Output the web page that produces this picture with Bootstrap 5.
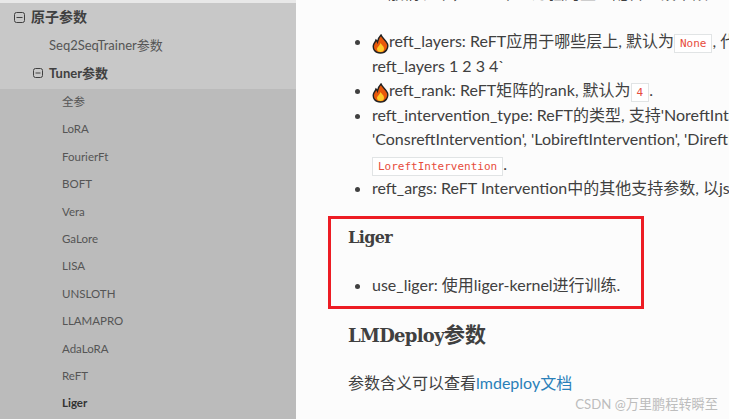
<!DOCTYPE html>
<html lang="en">
<head>
    <meta charset="UTF-8">
    <meta name="viewport" content="width=device-width, initial-scale=1">
    <title>Liger</title>
    <link href="https://cdn.jsdelivr.net/npm/bootstrap@5.3.0/dist/css/bootstrap.min.css" rel="stylesheet">
    <style>
        html, body {
            height: 419px;
            overflow: hidden;
        }

        body {
            background-color: #fcfcfc;
            color: #404040;
            font-family: Lato, "Noto Sans CJK SC", sans-serif;
        }

        .page {
            height: 419px;
            position: relative;
        }

        .side {
            width: 296px;
            flex: none;
            background-color: #c8c8c8;
            border-top: 3px solid #e8e8e8;
            color: #404040;
        }

        .side-row {
            height: 28px;
            font-size: 13px;
            line-height: 28px;
        }

        .side-first {
            padding-left: 14px;
            font-size: 14px;
            font-weight: 700;
            gap: 6px;
        }

        .side-second {
            padding-left: 49px;
            color: #555;
        }

        .side-tuner {
            padding-left: 33px;
            font-weight: 700;
            gap: 6px;
            color: #404040;
            margin-bottom: 2px;
        }

        .sub-list {
            background-color: #bbbbbb;
            height: 335px;
        }

        .sub-row {
            height: 27.4px;
            padding-left: 62px;
            font-size: 11.5px;
            line-height: 25px;
            color: #555;
        }

        .sub-active {
            color: #333;
            font-weight: 700;
        }

        .doc {
            min-width: 0;
            overflow: hidden;
            white-space: nowrap;
            font-size: 16px;
            line-height: 24.5px;
        }

        .cut-line {
            margin: -19px 0 0 76px;
            height: 48px;
        }

        .param-list {
            padding-left: 76px;
            margin: 0;
        }

        code.inline-val {
            font-family: "DejaVu Sans Mono", monospace;
            font-size: 11px;
            line-height: 1;
            color: #e74c3c;
            background-color: #fff;
            border: 1px solid #e1e4e5;
            padding: 2px 5px;
        }

        .flame {
            width: 17px;
            height: 20px;
            margin-block: -4px;
            vertical-align: -3px;
        }

        .red-box {
            width: 316px;
            height: 93px;
            margin: 15px 0 0 32px;
            border: 3px solid #ed1c24;
            padding: 7px 0 0 17px;
        }

        .doc-title {
            font-family: "DejaVu Serif", "Noto Sans CJK SC", serif;
            font-weight: 700;
            font-size: 16px;
            letter-spacing: -.6px;
            line-height: 24px;
            margin: 0 0 23px;
        }

        .red-box ul {
            padding-left: 24px;
            margin: 0;
        }

        .deploy-title {
            font-family: "DejaVu Serif", "Noto Sans CJK SC", serif;
            font-weight: 700;
            font-size: 18px;
            letter-spacing: -.7px;
            line-height: 28px;
            margin: 12px 0 21px 52px;
        }

        .deploy-title span {
            font-size: 21px;
            letter-spacing: 0;
        }

        .deploy-text {
            margin: 0 0 0 52px;
        }

        .deploy-text a {
            color: #2980b9;
            text-decoration: none;
        }

        .mark-text {
            position: absolute;
            right: 11px;
            bottom: 7px;
            font-size: 13.2px;
            line-height: 16px;
            color: #bdbdbd;
        }
    </style>
</head>
<body>
    <div class="page d-flex">
        <nav class="side">
            <div class="side-row side-first d-flex align-items-center">
                <svg width="11" height="11" viewBox="0 0 11 11" fill="none" stroke="#404040"><rect x=".5" y=".5" width="10" height="10" rx="2"/><path d="M2.500 5.500h6"/></svg>
                <span>原子参数</span>
            </div>
            <div class="side-row side-second">Seq2SeqTrainer参数</div>
            <div class="side-row side-tuner d-flex align-items-center">
                <svg width="10" height="10" viewBox="0 0 10 10" fill="none" stroke="#404040"><rect x=".5" y=".5" width="9" height="9" rx="2"/><path d="M2.500 5h5"/></svg>
                <span>Tuner参数</span>
            </div>
            <div class="sub-list">
                <div class="sub-row">全参</div>
                <div class="sub-row">LoRA</div>
                <div class="sub-row">FourierFt</div>
                <div class="sub-row">BOFT</div>
                <div class="sub-row">Vera</div>
                <div class="sub-row">GaLore</div>
                <div class="sub-row">LISA</div>
                <div class="sub-row">UNSLOTH</div>
                <div class="sub-row">LLAMAPRO</div>
                <div class="sub-row">AdaLoRA</div>
                <div class="sub-row">ReFT</div>
                <div class="sub-row sub-active">Liger</div>
            </div>
        </nav>

        <main class="doc flex-grow-1">
            <p class="cut-line">一般情况下，一个中一过强的卫星配合一段不限一个</p>
            <ul class="param-list">
                <li><svg class="flame" viewBox="0 0 17 20"><path d="M9 1c1 3 5 5 6.500 9 1.200 4-1.500 9-7 9s-8-4-7-8c.5-2 2-3 2.500-5 1 1 1.500 2 1.500 2C6 5 7 3 9 1z" fill="#e8590c" stroke="#222" stroke-width="1.400"/><path d="M8.500 9c1 2 3.500 3 3.500 6 0 2-1.500 3-3.500 3S5 17 5 15c0-2 2.500-3 3.500-6z" fill="#ffc928"/></svg>reft_layers: ReFT应用于哪些层上, 默认为<code class="inline-val">None</code>, 代表所有层<br>reft_layers 1 2 3 4`</li>
                <li><svg class="flame" viewBox="0 0 17 20"><path d="M9 1c1 3 5 5 6.500 9 1.200 4-1.500 9-7 9s-8-4-7-8c.5-2 2-3 2.500-5 1 1 1.500 2 1.500 2C6 5 7 3 9 1z" fill="#e8590c" stroke="#222" stroke-width="1.400"/><path d="M8.500 9c1 2 3.500 3 3.500 6 0 2-1.500 3-3.500 3S5 17 5 15c0-2 2.500-3 3.500-6z" fill="#ffc928"/></svg>reft_rank: ReFT矩阵的rank, 默认为<code class="inline-val">4</code>.</li>
                <li>reft_intervention_type: ReFT的类型, 支持'NoreftIntervention',<br>'ConsreftIntervention', 'LobireftIntervention', 'DireftIntervention',<br><code class="inline-val">LoreftIntervention</code>.</li>
                <li>reft_args: ReFT Intervention中的其他支持参数, 以json格式传入</li>
            </ul>

            <section class="red-box">
                <h3 class="doc-title">Liger</h3>
                <ul>
                    <li>use_liger: 使用liger-kernel进行训练.</li>
                </ul>
            </section>

            <h3 class="deploy-title">LMDeploy<span>参数</span></h3>
            <p class="deploy-text">参数含义可以查看<a href="#">lmdeploy文档</a></p>
        </main>

        <div class="mark-text">CSDN @万里鹏程转瞬至</div>
    </div>

    <script src="https://cdn.jsdelivr.net/npm/bootstrap@5.3.0/dist/js/bootstrap.bundle.min.js"></script>
</body>
</html>
